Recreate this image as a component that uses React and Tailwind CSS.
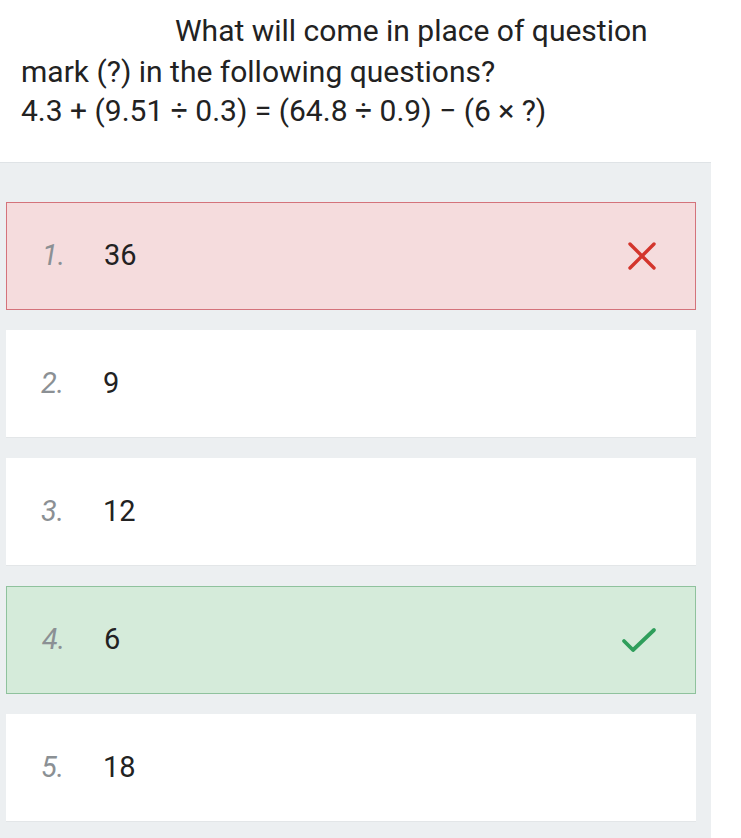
import React from 'react';

const options = [
  { n: 1, text: '36', state: 'wrong' },
  { n: 2, text: '9' },
  { n: 3, text: '12' },
  { n: 4, text: '6', state: 'right' },
  { n: 5, text: '18' },
];

function CrossIcon() {
  return (
    <svg width="30" height="30" viewBox="0 0 30 30" fill="none">
      <path d="M3 3 L27 27 M27 3 L3 27" stroke="#d3352c" strokeWidth="3.4" strokeLinecap="round" />
    </svg>
  );
}

function CheckIcon() {
  return (
    <svg width="36" height="30" viewBox="0 0 36 30" fill="none">
      <path d="M3 16 L12 25 L33 5" stroke="#2f9e5b" strokeWidth="3.8" strokeLinecap="round" strokeLinejoin="round" />
    </svg>
  );
}

function Option({ n, text, state }) {
  let box = 'bg-white border-b border-[#e3e6e8]';
  if (state === 'wrong') box = 'bg-[#f5dcdd] border border-[#d4737b]';
  if (state === 'right') box = 'bg-[#d5ebda] border border-[#8fc29d]';

  return (
    <div className={`h-[108px] flex items-center pl-[35px] pr-[38px] ${box}`}>
      <span className="w-[62px] italic text-[#8b9094]">{n}.</span>
      <span className="flex-1 text-[#222222]">{text}</span>
      {state === 'wrong' && <CrossIcon />}
      {state === 'right' && <CheckIcon />}
    </div>
  );
}

export default function App() {
  return (
    <div className="w-[741px] h-[838px] bg-white overflow-hidden text-[29px] font-['Roboto',sans-serif]">
      <div className="w-[711px] h-[163px] px-[21px] pt-[10px] text-[30px] text-[#222222] leading-[41px] border-b border-[#dfe3e6]">
        <p className="indent-[154px]">What will come in place of question mark (?) in the following questions?</p>
        <p className="-mt-[2px]">4.3 + (9.51 ÷ 0.3) = (64.8 ÷ 0.9) − (6 × ?)</p>
      </div>
      <div className="w-[711px] h-full bg-[#eceff1] pl-[6px] pr-[15px] pt-[39px] flex flex-col gap-[20px]">
        {options.map((o) => (
          <Option key={o.n} {...o} />
        ))}
      </div>
    </div>
  );
}
